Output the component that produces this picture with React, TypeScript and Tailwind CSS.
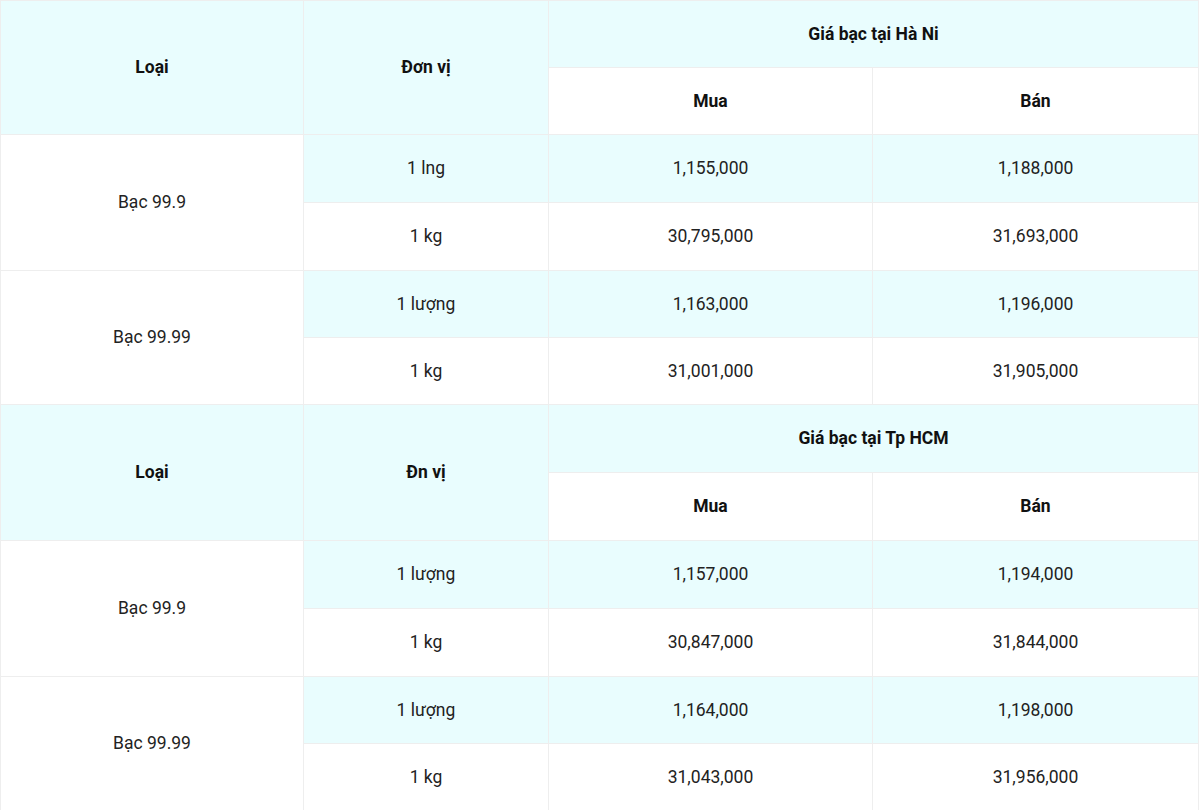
import React from "react";

const HEAD = "bg-[#e9fdfe]";
const cell = "border border-[#eeeeee] text-center align-middle text-[17.5px] text-[#222]";
const th = "border border-[#eeeeee] text-center align-middle text-[17.5px] font-bold text-[#111]";

type Row = { unit: string; buy: string; sell: string };
type Group = { name: string; rows: Row[] };
type Section = { city: string; unitLabel: string; groups: Group[] };

const sections: Section[] = [
  {
    city: "Giá bạc tại Hà Ni",
    unitLabel: "Đơn vị",
    groups: [
      { name: "Bạc 99.9", rows: [ { unit: "1 lng", buy: "1,155,000", sell: "1,188,000" }, { unit: "1 kg", buy: "30,795,000", sell: "31,693,000" } ] },
      { name: "Bạc 99.99", rows: [ { unit: "1 lượng", buy: "1,163,000", sell: "1,196,000" }, { unit: "1 kg", buy: "31,001,000", sell: "31,905,000" } ] },
    ],
  },
  {
    city: "Giá bạc tại Tp HCM",
    unitLabel: "Đn vị",
    groups: [
      { name: "Bạc 99.9", rows: [ { unit: "1 lượng", buy: "1,157,000", sell: "1,194,000" }, { unit: "1 kg", buy: "30,847,000", sell: "31,844,000" } ] },
      { name: "Bạc 99.99", rows: [ { unit: "1 lượng", buy: "1,164,000", sell: "1,198,000" }, { unit: "1 kg", buy: "31,043,000", sell: "31,956,000" } ] },
    ],
  },
];

export default function App() {
  return (
    <div className="w-[1200px] h-[810px] overflow-hidden bg-white" style={{ fontFamily: "Roboto, 'Liberation Sans', sans-serif" }}>
      <table className="w-[1198px] border-collapse table-fixed">
        <colgroup>
          <col className="w-[303px]" />
          <col className="w-[245px]" />
          <col className="w-[324px]" />
          <col className="w-[326px]" />
        </colgroup>
        <tbody>
          {sections.map((s, si) => (
            <React.Fragment key={si}>
              <tr className={si === 0 ? "h-[67px]" : "h-[68px]"}>
                <td rowSpan={2} className={`${th} ${HEAD}`}>Loại</td>
                <td rowSpan={2} className={`${th} ${HEAD}`}>{s.unitLabel}</td>
                <td colSpan={2} className={`${th} ${HEAD}`}>{s.city}</td>
              </tr>
              <tr className={si === 0 ? "h-[67px]" : "h-[68px]"}>
                <td className={`${th} bg-white`}>Mua</td>
                <td className={`${th} bg-white`}>Bán</td>
              </tr>
              {s.groups.map((g, gi) => (
                <React.Fragment key={gi}>
                  {g.rows.map((r, ri) => (
                    <tr key={ri} className={gi === 0 ? "h-[68px]" : "h-[67px]"}>
                      {ri === 0 && (
                        <td rowSpan={2} className={`${cell} bg-white`}>{g.name}</td>
                      )}
                      <td className={`${cell} ${ri === 0 ? HEAD : "bg-white"}`}>{r.unit}</td>
                      <td className={`${cell} ${ri === 0 ? HEAD : "bg-white"}`}>{r.buy}</td>
                      <td className={`${cell} ${ri === 0 ? HEAD : "bg-white"}`}>{r.sell}</td>
                    </tr>
                  ))}
                </React.Fragment>
              ))}
            </React.Fragment>
          ))}
        </tbody>
      </table>
    </div>
  );
}
